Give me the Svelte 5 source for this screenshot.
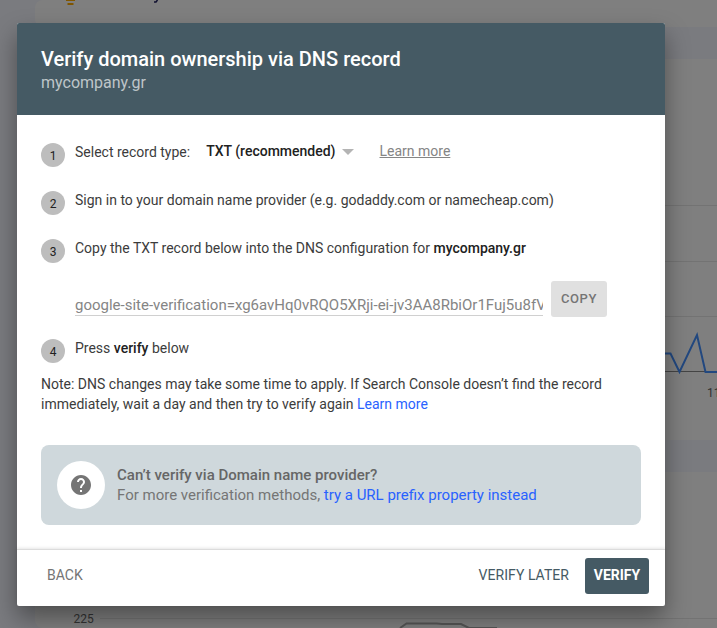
<script lang="ts">
	let recordType = $state('TXT (recommended)');
	let token = $state('google-site-verification=xg6avHq0vRQO5XRji-ei-jv3AA8RbiOr1Fuj5u8fVYk');

	const domain = 'mycompany.gr';
</script>

<div class="page">
	<div class="column">
		<div class="card card-top">
			<svg width="682" height="27" viewBox="35 0 682 27">
				<path d="M66 0h9M67.500 4h6" stroke="#ffab00" stroke-width="2" />
				<path d="M157.500 0l-1.500 2h-2" stroke="#202060" stroke-width="1.500" fill="none" />
			</svg>
		</div>
		<div class="card card-chart">
			<svg width="682" height="381" viewBox="35 59 682 381">
				<path d="M60 205.500H717M60 261.500H717M60 316.500H717" stroke="#e6e6e6" />
				<path d="M60 371.500H717" stroke="#888" />
				<path
					d="M640 353.500H670.500L679.500 372L697 335L705.500 372H717"
					stroke="#4590ff"
					stroke-width="2"
					fill="none"
				/>
				<text x="707" y="397">11/20</text>
			</svg>
		</div>
		<div class="card">
			<svg width="682" height="156" viewBox="35 472 682 156">
				<path d="M100 618.500H717" stroke="#e6e6e6" />
				<path
					d="M400 628L406.500 623.500H437L442 624H461L469 628H497"
					stroke="#aaa"
					stroke-width="2"
					fill="none"
				/>
				<text x="73.500" y="623">225</text>
			</svg>
		</div>
	</div>
</div>

<div class="scrim">
	<div class="dialog" role="dialog" aria-labelledby="dialog-title">
		<header>
			<h1 id="dialog-title">Verify domain ownership via DNS record</h1>
			<p>{domain}</p>
		</header>

		<div class="content">
			<ol>
				<li>
					<span class="number">1</span>
					<div class="step select-step">
						<span>Select record type:</span>
						<button class="select">
							{recordType}
							<span class="arrow"></span>
						</button>
						<a href="#learn" class="learn">Learn more</a>
					</div>
				</li>
				<li>
					<span class="number">2</span>
					<div class="step">Sign in to your domain name provider (e.g. godaddy.com or namecheap.com)</div>
				</li>
				<li>
					<span class="number">3</span>
					<div class="step">
						Copy the TXT record below into the DNS configuration for <b>{domain}</b>
					</div>
				</li>
			</ol>

			<div class="token-row">
				<div class="token">{token}</div>
				<button class="copy">COPY</button>
			</div>

			<ol>
				<li>
					<span class="number">4</span>
					<div class="step">Press <b>verify</b> below</div>
				</li>
			</ol>

			<p class="note">
				Note: DNS changes may take some time to apply. If Search Console doesn’t find the record<br />
				immediately, wait a day and then try to verify again <a href="#learn">Learn more</a>
			</p>

			<div class="help">
				<div class="help-icon">
					<svg width="24" height="24" viewBox="0 0 24 24" fill="#757575">
						<path
							d="M12 2C6.480 2 2 6.480 2 12s4.480 10 10 10 10-4.480 10-10S17.520 2 12 2zm1 17h-2v-2h2v2zm2.070-7.750l-.9.920C13.450 12.900 13 13.500 13 15h-2v-.5c0-1.100.45-2.100 1.170-2.830l1.240-1.260c.37-.36.59-.86.59-1.410 0-1.100-.9-2-2-2s-2 .9-2 2H8c0-2.210 1.790-4 4-4s4 1.790 4 4c0 .88-.36 1.680-.93 2.250z"
							stroke="#757575"
							stroke-width="0"
						/>
					</svg>
				</div>
				<div>
					<b>Can’t verify via Domain name provider?</b>
					<div>For more verification methods, <a href="#prefix">try a URL prefix property instead</a></div>
				</div>
			</div>
		</div>

		<footer>
			<button class="back">BACK</button>
			<button class="later">VERIFY LATER</button>
			<button class="verify">VERIFY</button>
		</footer>
	</div>
</div>

<style>
	:global(body) {
		overflow: hidden;
	}

	.page,
	.scrim {
		font-family: Roboto, 'Liberation Sans', sans-serif;
		font-size: 14px;
		line-height: 20px;
	}

	.page {
		height: 628px;
		padding-left: 35px;
		background: #f4f6ff;
		overflow: hidden;
	}

	.column {
		display: flex;
		flex-direction: column;
		gap: 32px;
	}

	.card {
		background: #fff;
		border-radius: 8px 0 0 8px;
	}

	.card-top {
		height: 27px;
	}

	.card svg {
		display: block;
	}

	.card text {
		font-size: 12px;
		fill: #666;
	}

	/* covers the whole page behind the dialog */
	.scrim {
		position: absolute;
		inset: 0;
		background: rgba(0, 0, 0, 0.5);
		padding: 23px 52px 22px 17px;
		overflow: hidden;
	}

	.dialog {
		display: flex;
		flex-direction: column;
		width: 648px;
		height: 583px;
		background: #fff;
		border-radius: 2px;
		box-shadow: 0 12px 24px 0 rgba(0, 0, 0, 0.38);
	}

	header {
		box-sizing: border-box;
		height: 92px;
		padding: 24px;
		background: #455a64;
		border-radius: 2px 2px 0 0;
		color: #fff;
	}

	h1 {
		margin: 0;
		font-size: 20px;
		font-weight: 500;
		line-height: 24px;
	}

	header p {
		margin: 0;
		font-size: 16px;
		line-height: 24px;
		color: rgba(255, 255, 255, 0.66);
	}

	.content {
		flex: 1;
		padding: 28px 24px 0;
		color: #3c3c3c;
	}

	ol {
		margin: 0;
		padding: 0;
		list-style: none;
	}

	li {
		display: flex;
		height: 48px;
		gap: 10px;
	}

	.number {
		width: 24px;
		height: 24px;
		border-radius: 50%;
		background: #bdbdbd;
		color: #212121;
		font-size: 12px;
		line-height: 26px;
		text-align: center;
	}

	.step {
		height: 20px;
		margin-top: -1px;
	}

	.select-step {
		display: flex;
		align-items: center;
	}

	b {
		font-weight: 500;
	}

	.step b {
		color: #212121;
	}

	button {
		padding: 0;
		border: none;
		background: none;
		font: inherit;
	}

	.select {
		display: flex;
		align-items: center;
		gap: 6px;
		margin: -2px 26px 0 16px;
		font-weight: 500;
		color: #212121;
	}

	.arrow {
		margin-top: 2px;
		border: 6px solid transparent;
		border-top-color: #b4b4b4;
		border-bottom: none;
	}

	a {
		color: #2962ff;
		text-decoration: none;
	}

	.learn {
		margin-top: -2px;
		color: #858585;
		text-decoration: underline;
	}

	.token-row {
		display: flex;
		align-items: flex-end;
		gap: 8px;
		height: 30px;
		margin-bottom: 22px;
		padding-left: 34px;
	}

	.token {
		width: 468px;
		height: 20px;
		margin-bottom: 1px;
		border-bottom: 1px solid #d0d0d0;
		color: #858585;
		font-size: 15px;
		white-space: nowrap;
		overflow: hidden;
	}

	.copy {
		width: 56px;
		height: 36px;
		background: #e0e0e0;
		border-radius: 3px;
		color: #757575;
		font-size: 13px;
		font-weight: 500;
		letter-spacing: 0.6px;
	}

	.note {
		margin: -13px 0 31px;
	}

	.help {
		display: flex;
		align-items: center;
		gap: 12px;
		box-sizing: border-box;
		width: 600px;
		height: 80px;
		padding: 0 16px;
		background: #cfd8dc;
		border-radius: 8px;
		color: #757575;
		font-size: 15px;
	}

	.help b {
		color: #666;
	}

	.help-icon {
		display: flex;
		align-items: center;
		justify-content: center;
		width: 48px;
		height: 48px;
		background: #fff;
		border-radius: 50%;
	}

	footer {
		display: flex;
		align-items: center;
		box-sizing: border-box;
		height: 57px;
		padding: 0 16px 4px 30px;
		border-top: 1px solid #dcdcdc;
		box-shadow: 0 -1px 3px rgba(0, 0, 0, 0.1);
	}

	footer button {
		padding-bottom: 2px;
	}

	.back {
		margin-right: auto;
		color: #757575;
	}

	.later {
		margin-right: 16px;
		color: #455a64;
		letter-spacing: 0.05px;
	}

	.verify {
		width: 64px;
		height: 36px;
		background: #455a64;
		border-radius: 3px;
		color: #fff;
		font-weight: 700;
	}
</style>
